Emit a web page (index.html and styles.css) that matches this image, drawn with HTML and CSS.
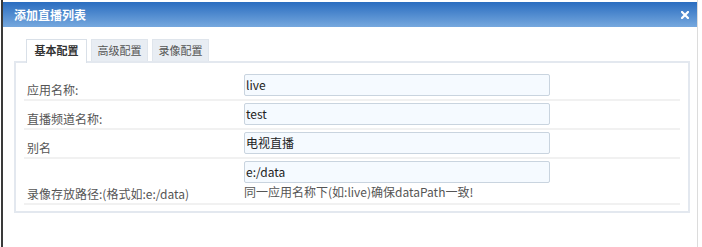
FILE: index.html
```html
<!DOCTYPE html>
<html lang="zh">
<head>
<meta charset="utf-8">
<link rel="stylesheet" href="styles.css">
</head>
<body>
<div class="dialog">
  <div class="header">
    <span class="title">添加直播列表</span>
    <svg class="close" width="8" height="8" viewBox="0 0 8 8"><path d="M1 1L7 7M7 1L1 7" stroke="#fff" stroke-width="2.2" stroke-linecap="square"/></svg>
  </div>
  <div class="content">
    <div class="tabs">
      <div class="tab active">基本配置</div>
      <div class="tab">高级配置</div>
      <div class="tab">录像配置</div>
    </div>
    <div class="panel">
      <div class="row">
        <div class="label">应用名称:</div>
        <div class="value"><div class="input">live</div></div>
      </div>
      <div class="row">
        <div class="label">直播频道名称:</div>
        <div class="value"><div class="input">test</div></div>
      </div>
      <div class="row">
        <div class="label">别名</div>
        <div class="value"><div class="input">电视直播</div></div>
      </div>
      <div class="row">
        <div class="label">录像存放路径:(格式如:e:/data)</div>
        <div class="value"><div class="input">e:/data</div><div class="hint">同一应用名称下(如:live)确保dataPath一致!</div></div>
      </div>
    </div>
  </div>
</div>
</body>
</html>
```
FILE: styles.css
```css
html, body {
  margin: 0;
  padding: 0;
  background: #fff;
}
body {
  font-family: "Noto Sans CJK SC", "Noto Sans", sans-serif;
  font-size: 12px;
  color: #555;
}
.dialog {
  margin-left: 1px;
  width: 697px;
  height: 247px;
  border-left: 2px solid #3a3a3a;
  border-right: 1px solid #dcdcdc;
  padding-top: 2px;
  box-sizing: border-box;
}
.header {
  height: 25px;
  background: linear-gradient(to bottom, #2a6dc0, #76a8de);
  display: flex;
  align-items: center;
  justify-content: space-between;
  padding: 0 8px 0 11px;
}
.title {
  color: #fff;
  font-weight: bold;
  font-size: 12px;
  line-height: 25px;
}
.close {
  display: block;
}
.content {
  padding: 12px 7px 0 11px;
}
.tabs {
  display: flex;
  gap: 4px;
  padding-left: 12px;
  height: 22px;
}
.tab {
  box-sizing: border-box;
  width: 57px;
  height: 22px;
  line-height: 21px;
  text-align: center;
  background: #e8edf3;
  border: 1px solid #dfe5ec;
  border-bottom: none;
  color: #555;
  font-size: 11px;
}
.tab.active {
  width: 61px;
  background: #fff;
  color: #333;
  font-weight: bold;
  height: 24px;
  border-color: #d9e0e8;
  position: relative;
  z-index: 1;
}
.panel {
  border: 2px solid #e3e8ef;
  padding: 9px 8px 8px 8px;
  height: 152px;
  box-sizing: border-box;
}
.row {
  display: flex;
  align-items: flex-end;
  border-bottom: 2px solid #f1f1f1;
}
.label {
  width: 217px;
  padding-left: 3px;
  line-height: 16px;
  padding-bottom: 1px;
  color: #555;
}
.value {
  padding: 2px 0 3px;
}
.input {
  box-sizing: border-box;
  width: 306px;
  height: 22px;
  border: 1px solid #c9d4df;
  border-radius: 2px;
  background: #f5faff;
  line-height: 20px;
  padding-left: 1px;
  color: #222;
}
.hint {
  line-height: 16px;
  padding-top: 1px;
  color: #555;
}
```
